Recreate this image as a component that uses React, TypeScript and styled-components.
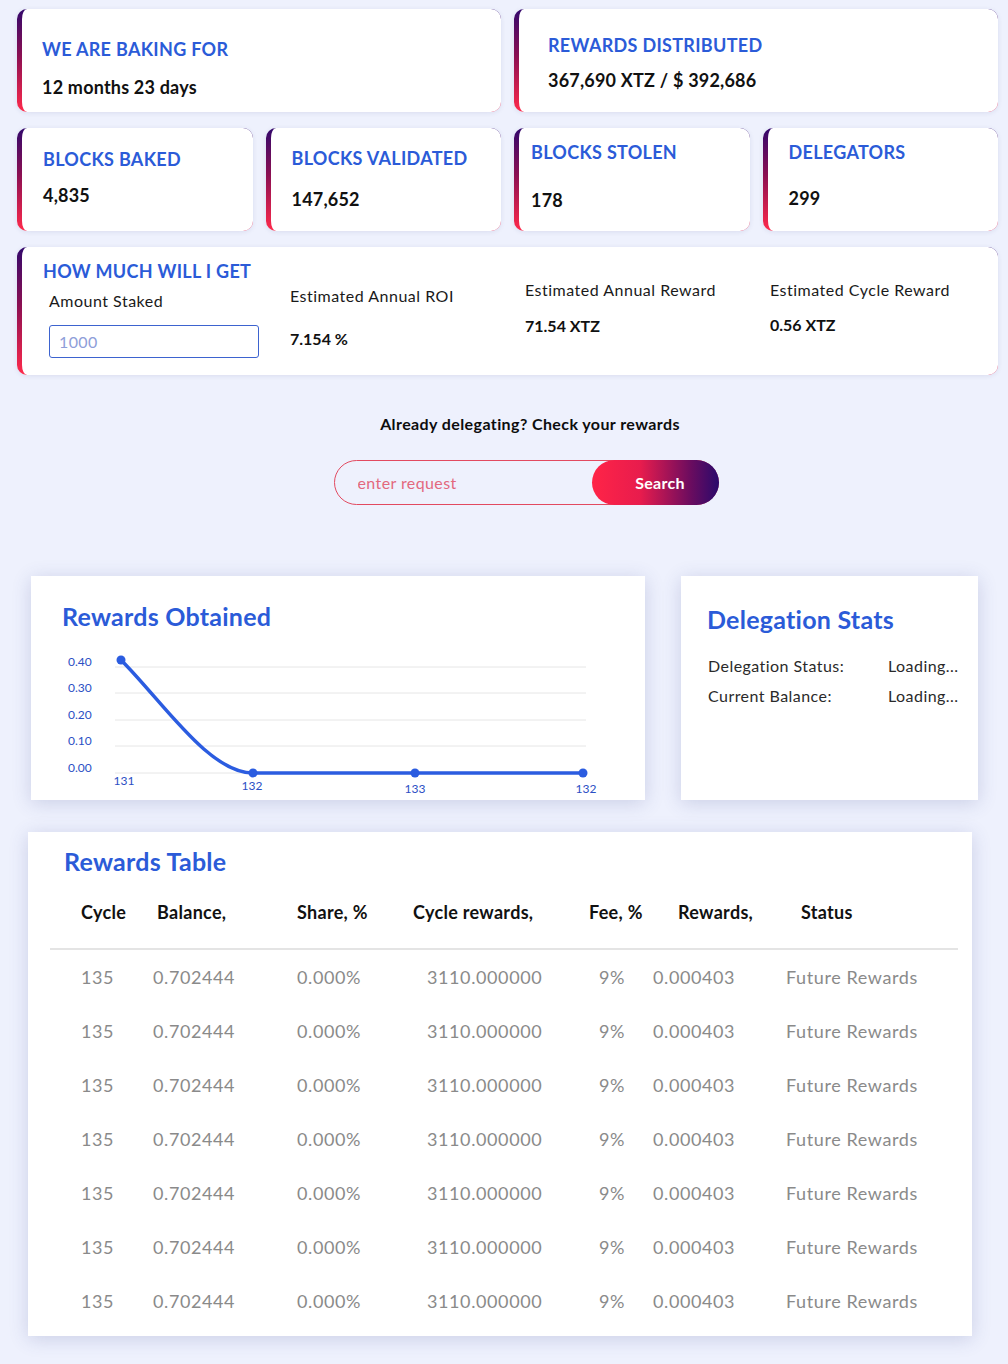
import React from 'react';
import styled, { createGlobalStyle } from 'styled-components';

const GlobalStyle = createGlobalStyle`
  body {
    margin: 0;
    background: #eef1fd;
    font-family: Lato, "Open Sans", sans-serif;
    color: #111;
  }
  * { box-sizing: border-box; }
`;

const BLUE = '#2b5bd8';
const EDGE = 'linear-gradient(to bottom, #33086c 0%, #8a0f52 45%, #ff2a4b 100%)';

const Page = styled.div`
  padding: 9px 10px 28px 17px;
`;

const StatsGrid = styled.div`
  display: grid;
  grid-template-columns: repeat(4, 1fr);
  grid-template-rows: 103px 103px 128px;
  column-gap: 13px;
  row-gap: 16px;
`;

const StatCard = styled.div<{ $span?: number; $pt: number; $gap: number; $pl: number }>`
  grid-column: span ${(p) => p.$span || 1};
  display: flex;
  flex-direction: column;
  gap: ${(p) => p.$gap}px;
  padding: ${(p) => p.$pt}px 16px 0 ${(p) => p.$pl}px;
  border-radius: 10px;
  border-left: 5px solid transparent;
  background: linear-gradient(#fff, #fff) padding-box, ${EDGE} border-box;
  box-shadow: 0 1px 5px rgba(40, 50, 120, 0.1);
`;

const StatTitle = styled.div`
  font-size: 18px;
  line-height: 22px;
  font-weight: 700;
  color: ${BLUE};
  text-transform: uppercase;
  letter-spacing: 0.3px;
  white-space: nowrap;
`;

const StatValue = styled.div`
  font-size: 18px;
  line-height: 20px;
  font-weight: 700;
  letter-spacing: 0.2px;
  color: #111;
`;

const Calculator = styled.div`
  grid-column: 1 / -1;
  display: grid;
  grid-template-columns: 247px 235px 245px 1fr;
  padding-left: 21px;
  border-radius: 10px;
  border-left: 5px solid transparent;
  background: linear-gradient(#fff, #fff) padding-box, ${EDGE} border-box;
  box-shadow: 0 1px 5px rgba(40, 50, 120, 0.1);
`;

const CalcColumn = styled.div<{ $pt: number; $gap: number }>`
  display: flex;
  flex-direction: column;
  align-items: flex-start;
  padding-top: ${(p) => p.$pt}px;
  gap: ${(p) => p.$gap}px;
`;

const CalcLabel = styled.div<{ $indent?: number }>`
  font-size: 16px;
  line-height: 20px;
  letter-spacing: 0.5px;
  color: #1a1a1a;
  margin-left: ${(p) => p.$indent || 0}px;
`;

const CalcValue = styled.div`
  font-size: 16px;
  line-height: 20px;
  font-weight: 700;
`;

const AmountInput = styled.input`
  width: 210px;
  height: 33px;
  margin-left: 6px;
  margin-top: 5px;
  padding: 0 9px;
  border: 1px solid #3d63cf;
  border-radius: 3px;
  font-family: inherit;
  font-size: 16px;
  letter-spacing: 0.4px;
  color: #333;
  outline: none;
  &::placeholder {
    color: #8e9ed9;
  }
`;

const CheckSection = styled.div`
  display: flex;
  flex-direction: column;
  align-items: center;
  gap: 26px;
  margin-top: 39px;
  padding-left: 45px;
`;

const CheckTitle = styled.div`
  font-size: 16px;
  line-height: 20px;
  font-weight: 700;
  letter-spacing: 0.4px;
  color: #0d0d0d;
`;

const SearchForm = styled.form`
  display: flex;
  width: 385px;
  height: 45px;
  border: 1px solid #e24a60;
  border-radius: 23px;
  margin-left: -8px;
`;

const SearchInput = styled.input`
  flex: 1;
  min-width: 0;
  border: 0;
  background: transparent;
  padding-left: 23px;
  font-family: inherit;
  font-size: 16px;
  letter-spacing: 0.4px;
  outline: none;
  &::placeholder {
    color: #e3687e;
  }
`;

const SearchButton = styled.button`
  width: 127px;
  margin: -1px -1px -1px 0;
  padding: 0 0 0 10px;
  border: 0;
  border-radius: 23px;
  background: linear-gradient(to right, #ff2447 0%, #e81c4d 38%, #6a0c5f 78%, #2a0a6c 100%);
  color: #fff;
  font-family: inherit;
  font-size: 16px;
  font-weight: 700;
  letter-spacing: 0.3px;
  cursor: pointer;
`;

const PanelRow = styled.div`
  display: flex;
  gap: 36px;
  margin: 71px 0 0 14px;
`;

const Panel = styled.div<{ $w: number; $h: number }>`
  width: ${(p) => p.$w}px;
  height: ${(p) => p.$h}px;
  background: #fff;
  box-shadow: 0 3px 18px rgba(60, 70, 140, 0.2);
`;

const PanelTitle = styled.h2<{ $pt: number; $pl: number }>`
  margin: 0;
  padding: ${(p) => p.$pt}px 0 0 ${(p) => p.$pl}px;
  font-size: 25px;
  line-height: 30px;
  font-weight: 700;
  letter-spacing: 0.25px;
  color: ${BLUE};
`;

const ChartSvg = styled.svg`
  display: block;
  margin-top: 14px;
`;

const StatsList = styled.div`
  display: flex;
  flex-direction: column;
  gap: 10px;
  margin-top: 22px;
  padding-left: 27px;
`;

const StatsRow = styled.div`
  display: grid;
  grid-template-columns: 180px 1fr;
  font-size: 16px;
  line-height: 20px;
  letter-spacing: 0.45px;
  color: #2a2a2a;
`;

const TablePanel = styled(Panel)`
  margin: 32px 0 0 11px;
`;

const Table = styled.div`
  margin: 0 14px 0 22px;
`;

const HeadRow = styled.div`
  display: grid;
  grid-template-columns: 76px 140px 116px 176px 89px 123px 1fr;
  align-items: center;
  height: 74px;
  padding-left: 31px;
  border-bottom: 2px solid #e4e4e4;
  font-size: 18px;
  font-weight: 700;
  letter-spacing: 0.3px;
  color: #111;
`;

const DataRow = styled.div`
  display: grid;
  grid-template-columns: 72px 144px 130px 172px 54px 133px 1fr;
  align-items: center;
  height: 54px;
  padding-left: 31px;
  font-size: 18px;
  letter-spacing: 0.6px;
  color: #8a8a8a;
  &:first-of-type {
    margin-top: 4px;
  }
`;

const heads = ['Cycle', 'Balance,', 'Share, %', 'Cycle rewards,', 'Fee, %', 'Rewards,', 'Status'];

const rows = Array.from({ length: 7 }, () => ({
  cycle: '135',
  balance: '0.702444',
  share: '0.000%',
  cycleRewards: '3110.000000',
  fee: '9%',
  rewards: '0.000403',
  status: 'Future Rewards',
}));

const RewardsChart = () => {
  // viewBox uses page coordinates; the svg sits at (31, 645)
  const ox = 31;
  const oy = 645;
  const grid = [
    { label: '0.40', y: 667 },
    { label: '0.30', y: 693 },
    { label: '0.20', y: 720 },
    { label: '0.10', y: 746 },
    { label: '0.00', y: 773 },
  ];
  const points = [
    { x: 121, y: 660, label: '131', ly: 782, lx: 124 },
    { x: 253, y: 773, label: '132', ly: 787, lx: 252 },
    { x: 415, y: 773, label: '133', ly: 790, lx: 415 },
    { x: 583, y: 773, label: '132', ly: 790, lx: 586 },
  ];
  return (
    <ChartSvg width={614} height={154} viewBox={`${ox} ${oy} 614 154`}>
      {grid.map((g) => (
        <g key={g.label}>
          <line x1={115} x2={586} y1={g.y} y2={g.y} stroke="#e6e6e6" strokeWidth={1} />
          <text x={68} y={g.y - 4} dominantBaseline="middle" fontSize={12} fill="#2b4fc4" fontFamily="Lato, sans-serif">
            {g.label}
          </text>
        </g>
      ))}
      <path
        d="M121 660 C163 702 209 773 253 773 L583 773"
        fill="none"
        stroke="#2b5ce0"
        strokeWidth={3.5}
        strokeLinecap="round"
      />
      {points.map((p, i) => (
        <g key={i}>
          <circle cx={p.x} cy={p.y} r={4.5} fill="#2b5ce0" />
          <text x={p.lx} y={p.ly} textAnchor="middle" dominantBaseline="middle" fontSize={12} fill="#2b4fc4" fontFamily="Lato, sans-serif">
            {p.label}
          </text>
        </g>
      ))}
    </ChartSvg>
  );
};

export default function App() {
  return (
    <>
      <GlobalStyle />
      <Page>
        <StatsGrid>
          <StatCard $span={2} $pt={29} $gap={17} $pl={20}>
            <StatTitle>We are baking for</StatTitle>
            <StatValue>12 months 23 days</StatValue>
          </StatCard>
          <StatCard $span={2} $pt={25} $gap={14} $pl={29}>
            <StatTitle>Rewards distributed</StatTitle>
            <StatValue>367,690 XTZ / $ 392,686</StatValue>
          </StatCard>
          <StatCard $pt={20} $gap={15} $pl={21}>
            <StatTitle>Blocks baked</StatTitle>
            <StatValue>4,835</StatValue>
          </StatCard>
          <StatCard $pt={19} $gap={20} $pl={21}>
            <StatTitle>Blocks validated</StatTitle>
            <StatValue>147,652</StatValue>
          </StatCard>
          <StatCard $pt={13} $gap={27} $pl={12}>
            <StatTitle>Blocks stolen</StatTitle>
            <StatValue>178</StatValue>
          </StatCard>
          <StatCard $pt={13} $gap={25} $pl={21}>
            <StatTitle>Delegators</StatTitle>
            <StatValue>299</StatValue>
          </StatCard>
          <Calculator>
            <CalcColumn $pt={13} $gap={9}>
              <StatTitle>How much will I get</StatTitle>
              <CalcLabel $indent={6}>Amount Staked</CalcLabel>
              <AmountInput placeholder="1000" />
            </CalcColumn>
            <CalcColumn $pt={39} $gap={23}>
              <CalcLabel>Estimated Annual ROI</CalcLabel>
              <CalcValue>7.154 %</CalcValue>
            </CalcColumn>
            <CalcColumn $pt={33} $gap={16}>
              <CalcLabel>Estimated Annual Reward</CalcLabel>
              <CalcValue>71.54 XTZ</CalcValue>
            </CalcColumn>
            <CalcColumn $pt={33} $gap={15}>
              <CalcLabel>Estimated Cycle Reward</CalcLabel>
              <CalcValue>0.56 XTZ</CalcValue>
            </CalcColumn>
          </Calculator>
        </StatsGrid>

        <CheckSection>
          <CheckTitle>Already delegating? Check your rewards</CheckTitle>
          <SearchForm onSubmit={(e) => e.preventDefault()}>
            <SearchInput placeholder="enter request" />
            <SearchButton type="submit">Search</SearchButton>
          </SearchForm>
        </CheckSection>

        <PanelRow>
          <Panel $w={614} $h={224}>
            <PanelTitle $pt={25} $pl={31}>Rewards Obtained</PanelTitle>
            <RewardsChart />
          </Panel>
          <Panel $w={297} $h={224}>
            <PanelTitle $pt={28} $pl={26}>Delegation Stats</PanelTitle>
            <StatsList>
              <StatsRow>
                <span>Delegation Status:</span>
                <span>Loading...</span>
              </StatsRow>
              <StatsRow>
                <span>Current Balance:</span>
                <span>Loading...</span>
              </StatsRow>
            </StatsList>
          </Panel>
        </PanelRow>

        <TablePanel $w={944} $h={504}>
          <PanelTitle $pt={14} $pl={36}>Rewards Table</PanelTitle>
          <Table>
            <HeadRow>
              {heads.map((h) => (
                <span key={h}>{h}</span>
              ))}
            </HeadRow>
            {rows.map((r, i) => (
              <DataRow key={i}>
                <span>{r.cycle}</span>
                <span>{r.balance}</span>
                <span>{r.share}</span>
                <span>{r.cycleRewards}</span>
                <span>{r.fee}</span>
                <span>{r.rewards}</span>
                <span>{r.status}</span>
              </DataRow>
            ))}
          </Table>
        </TablePanel>
      </Page>
    </>
  );
}
